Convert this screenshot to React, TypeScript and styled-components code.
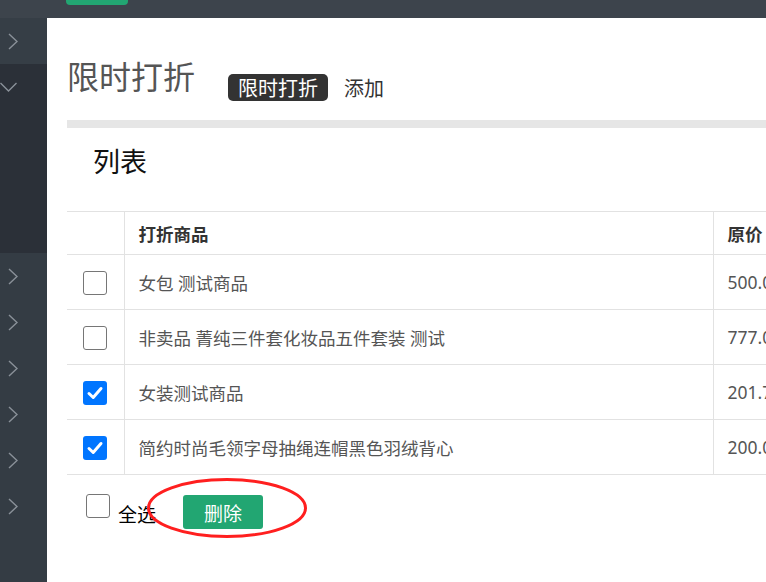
import styled, { createGlobalStyle } from "styled-components";

const GlobalStyle = createGlobalStyle`
  html, body {
    margin: 0;
    padding: 0;
    width: 766px;
    height: 582px;
    overflow: hidden;
    font-family: "Noto Sans", "Noto Sans CJK SC", sans-serif;
  }
`

const Page = styled.div`
  display: flex;
  flex-direction: column;
  width: 766px;
  height: 582px;
`

const TopBar = styled.div`
  height: 18px;
  background: #3d444c;
  padding-left: 66px;
  flex-shrink: 0;
`

const TopTab = styled.div`
  width: 62px;
  height: 5px;
  background: #22a672;
  border-radius: 0 0 4px 4px;
`

const Body = styled.div`
  flex: 1;
  display: flex;
  min-height: 0;
`

const Sidebar = styled.div`
  width: 47px;
  flex-shrink: 0;
  background: #343c44;
  display: flex;
  flex-direction: column;
`

const SideItem = styled.div<{ $height: number; $bg: string; $open?: boolean }>`
  height: ${p => p.$height}px;
  background: ${p => p.$bg};
  display: flex;
  align-items: ${p => (p.$open ? "flex-start" : "center")};
  padding-left: ${p => (p.$open ? 0 : 8)}px;
  padding-top: ${p => (p.$open ? 18 : 0)}px;
  box-sizing: border-box;
`

const Main = styled.div`
  flex: 1;
  background: #fff;
  padding-left: 20px;
  overflow: hidden;
`

const Header = styled.div`
  display: flex;
  align-items: flex-start;
  padding-top: 33px;
`

const Title = styled.h1`
  margin: 0;
  font-family: "Noto Sans CJK SC", sans-serif;
  font-weight: 400;
  font-size: 32px;
  line-height: 48px;
  color: #555;
`

const Tabs = styled.div`
  display: flex;
  align-items: center;
  gap: 16px;
  margin-top: 23px;
  margin-left: 33px;
`

const Tab = styled.span<{ $active?: boolean }>`
  font-family: "Noto Sans CJK SC", sans-serif;
  font-size: 20px;
  line-height: 27px;
  padding: ${p => (p.$active ? "0 10px" : "0")};
  border-radius: 5px;
  color: ${p => (p.$active ? "#fff" : "#333")};
  background: ${p => (p.$active ? "#333" : "transparent")};
`

const Divider = styled.div`
  height: 8px;
  background: #e6e6e6;
  margin-top: 19px;
`

const SectionTitle = styled.h2`
  margin: 13px 0 0 26px;
  font-family: "Noto Sans CJK SC", sans-serif;
  font-weight: 400;
  font-size: 27px;
  line-height: 40px;
  color: #111;
`

const Table = styled.table`
  margin-top: 30px;
  width: 780px;
  border-collapse: collapse;
  table-layout: fixed;
  font-family: "Noto Sans", "Noto Sans CJK SC", sans-serif;
  font-size: 17.5px;
  color: #555;
`

const Th = styled.th<{ $w?: number }>`
  width: ${p => (p.$w ? `${p.$w}px` : "auto")};
  height: 43px;
  padding: 0 14px;
  text-align: left;
  font-weight: 700;
  color: #333;
  border-top: 1px solid #e2e2e2;
  border-bottom: 1px solid #e2e2e2;
  & + & {
    border-left: 1px solid #e2e2e2;
  }
  box-sizing: border-box;
`

const Td = styled.td`
  height: 54px;
  padding: 0 14px;
  white-space: nowrap;
  overflow: hidden;
  border-bottom: 1px solid #e2e2e2;
  & + & {
    border-left: 1px solid #e2e2e2;
  }
`

const CheckCell = styled(Td)`
  padding: 0;
  text-align: center;
`

const Box = styled.span<{ $checked?: boolean }>`
  display: inline-flex;
  align-items: center;
  justify-content: center;
  width: 24px;
  height: 24px;
  box-sizing: border-box;
  border-radius: 3px;
  vertical-align: middle;
  border: ${p => (p.$checked ? "none" : "1.5px solid #767676")};
  background: ${p => (p.$checked ? "#0075ff" : "#fff")};
`

const Footer = styled.div`
  position: relative;
  display: flex;
  align-items: flex-start;
  padding: 19px 0 0 19px;
`

const SelectAll = styled.span`
  margin: 8px 0 0 8px;
  font-family: "Noto Sans CJK SC", sans-serif;
  font-size: 19px;
  line-height: 24px;
  color: #000;
`

const DeleteButton = styled.button`
  margin: 1px 0 0 27px;
  width: 80px;
  height: 34px;
  border: none;
  border-radius: 3px;
  background: #22a672;
  color: #fff;
  font-family: "Noto Sans CJK SC", sans-serif;
  font-size: 19px;
  padding: 0;
`

const Mark = styled.svg`
  position: absolute;
  left: 79px;
  top: 2px;
  pointer-events: none;
`

const Chevron = ({ down }: { down?: boolean }) =>
  down ? (
    <svg width="18" height="10" viewBox="0 0 18 10">
      <polyline points="0.5,1 8.5,9 16.5,1" fill="none" stroke="#8a9199" strokeWidth="1.4" />
    </svg>
  ) : (
    <svg width="10" height="17" viewBox="0 0 10 17">
      <polyline points="1,1 9,8.5 1,16" fill="none" stroke="#8a9199" strokeWidth="1.4" />
    </svg>
  )

const Check = ({ checked }: { checked?: boolean }) => (
  <Box $checked={checked}>
    {checked && (
      <svg width="18" height="18" viewBox="0 0 18 18">
        <polyline points="3,9.5 7.2,13.5 15,4.5" fill="none" stroke="#fff" strokeWidth="3" strokeLinecap="round" strokeLinejoin="round" />
      </svg>
    )}
  </Box>
)

const rows = [
  { name: "女包 测试商品", price: "500.00", checked: false },
  { name: "非卖品 菁纯三件套化妆品五件套装 测试", price: "777.00", checked: false },
  { name: "女装测试商品", price: "201.70", checked: true },
  { name: "简约时尚毛领字母抽绳连帽黑色羽绒背心", price: "200.00", checked: true },
]

export default function App() {
  return (
    <Page>
      <GlobalStyle />
      <TopBar>
        <TopTab />
      </TopBar>
      <Body>
        <Sidebar>
          <SideItem $height={46} $bg="#363e46"><Chevron /></SideItem>
          <SideItem $height={189} $bg="#2b3038" $open><Chevron down /></SideItem>
          {[0, 1, 2, 3, 4, 5].map(i => (
            <SideItem key={i} $height={46} $bg="#343c44"><Chevron /></SideItem>
          ))}
        </Sidebar>

        <Main>
          <Header>
            <Title>限时打折</Title>
            <Tabs>
              <Tab $active>限时打折</Tab>
              <Tab>添加</Tab>
            </Tabs>
          </Header>
          <Divider />
          <SectionTitle>列表</SectionTitle>

          <Table>
            <thead>
              <tr>
                <Th $w={57} />
                <Th $w={589}>打折商品</Th>
                <Th>原价</Th>
              </tr>
            </thead>
            <tbody>
              {rows.map(r => (
                <tr key={r.name}>
                  <CheckCell><Check checked={r.checked} /></CheckCell>
                  <Td>{r.name}</Td>
                  <Td>{r.price}</Td>
                </tr>
              ))}
            </tbody>
          </Table>

          <Footer>
            <Check />
            <SelectAll>全选</SelectAll>
            <DeleteButton>删除</DeleteButton>
            <Mark width="164" height="64" viewBox="0 0 164 64">
              <ellipse cx="81" cy="31" rx="78.5" ry="28.5" fill="none" stroke="#ff1f1f" strokeWidth="3" />
            </Mark>
          </Footer>
        </Main>
      </Body>
    </Page>
  )
}
